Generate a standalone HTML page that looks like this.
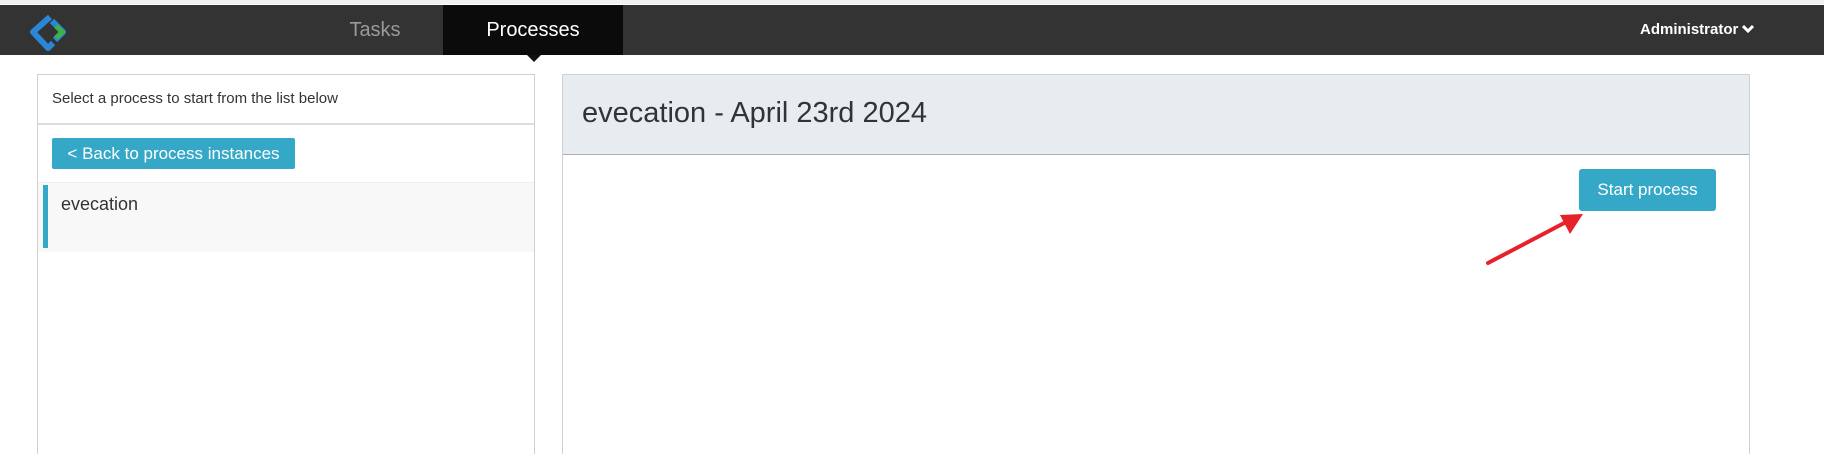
<!DOCTYPE html>
<html style="margin:0;height:454px;overflow:hidden"><head><style>
body{margin:0;width:1824px;height:454px;overflow:hidden;background:#fff;font-family:"Liberation Sans",sans-serif;position:relative}
.a{position:absolute}
</style></head><body>
<div class="a" style="left:0;top:0;width:1824px;height:4px;background:#f0f0f0"></div>
<div class="a" style="left:0;top:5px;width:1824px;height:50px;background:#333"></div>
<svg class="a" style="left:28px;top:12px" width="40" height="40" viewBox="0 0 40 40">
<path d="M22 5 L5 20 L20 36 L25 31" fill="none" stroke="#2a86d6" stroke-width="6" stroke-linejoin="round"/>
<path d="M24 9 L35 20 L27 28" fill="none" stroke="#2a86d6" stroke-width="6" stroke-linejoin="round"/>
<path d="M28 14 L34 20 L28 26" fill="none" stroke="#3fb04a" stroke-width="5"/>
</svg>
<div class="a" style="left:330px;top:5px;width:90px;height:50px;line-height:50px;text-align:center;color:#9a9a9a;font-size:20px">Tasks</div>
<div class="a" style="left:443px;top:5px;width:180px;height:50px;line-height:50px;text-align:center;color:#fff;font-size:20px;background:#0b0b0b">Processes</div>
<div class="a" style="left:527px;top:55px;width:0;height:0;border-left:7px solid transparent;border-right:7px solid transparent;border-top:7px solid #111"></div>
<div class="a" style="left:1640px;top:18px;color:#fff;font-size:15px;font-weight:bold;line-height:24px">Administrator</div>
<svg class="a" style="left:1742px;top:24px" width="12" height="10"><path d="M1 2 L6 7 L11 2" fill="none" stroke="#fff" stroke-width="3"/></svg>

<div class="a" style="left:37px;top:74px;width:498px;height:380px;border:1px solid #d0d0d0;border-bottom:none;box-sizing:border-box"></div>
<div class="a" style="left:38px;top:75px;width:496px;height:50px;border-bottom:2px solid #ddd;box-sizing:border-box;font-size:15px;color:#333;line-height:48px;padding-left:14px">Select a process to start from the list below</div>
<div class="a" style="left:52px;top:138px;width:243px;height:31px;background:#36a8c7;border-radius:2px;color:#fff;font-size:17px;line-height:31px;text-align:center">&lt; Back to process instances</div>
<div class="a" style="left:38px;top:182px;width:496px;height:69px;background:#f8f8f8;border-top:1px solid #eee"></div>
<div class="a" style="left:43px;top:185px;width:5px;height:63px;background:#36a8c7"></div>
<div class="a" style="left:61px;top:194px;font-size:18px;color:#333">evecation</div>

<div class="a" style="left:562px;top:74px;width:1188px;height:380px;border:1px solid #d0d0d0;border-bottom:none;box-sizing:border-box"></div>
<div class="a" style="left:563px;top:75px;width:1186px;height:80px;background:#e7ecf0;border-bottom:1px solid #a8b0bb;box-sizing:border-box"></div>
<div class="a" style="left:582px;top:95px;font-size:29px;color:#333;line-height:36px">evecation - April 23rd 2024</div>
<div class="a" style="left:1579px;top:169px;width:137px;height:42px;background:#36a8c7;border-radius:3px;color:#fff;font-size:17px;line-height:42px;text-align:center">Start process</div>
<svg class="a" style="left:1480px;top:205px" width="110" height="65"><path d="M8 58 L88 16" stroke="#e8202a" stroke-width="4" stroke-linecap="round"/><path d="M103 9 L80 10 L90 29 Z" fill="#e8202a"/></svg>
</body></html>
